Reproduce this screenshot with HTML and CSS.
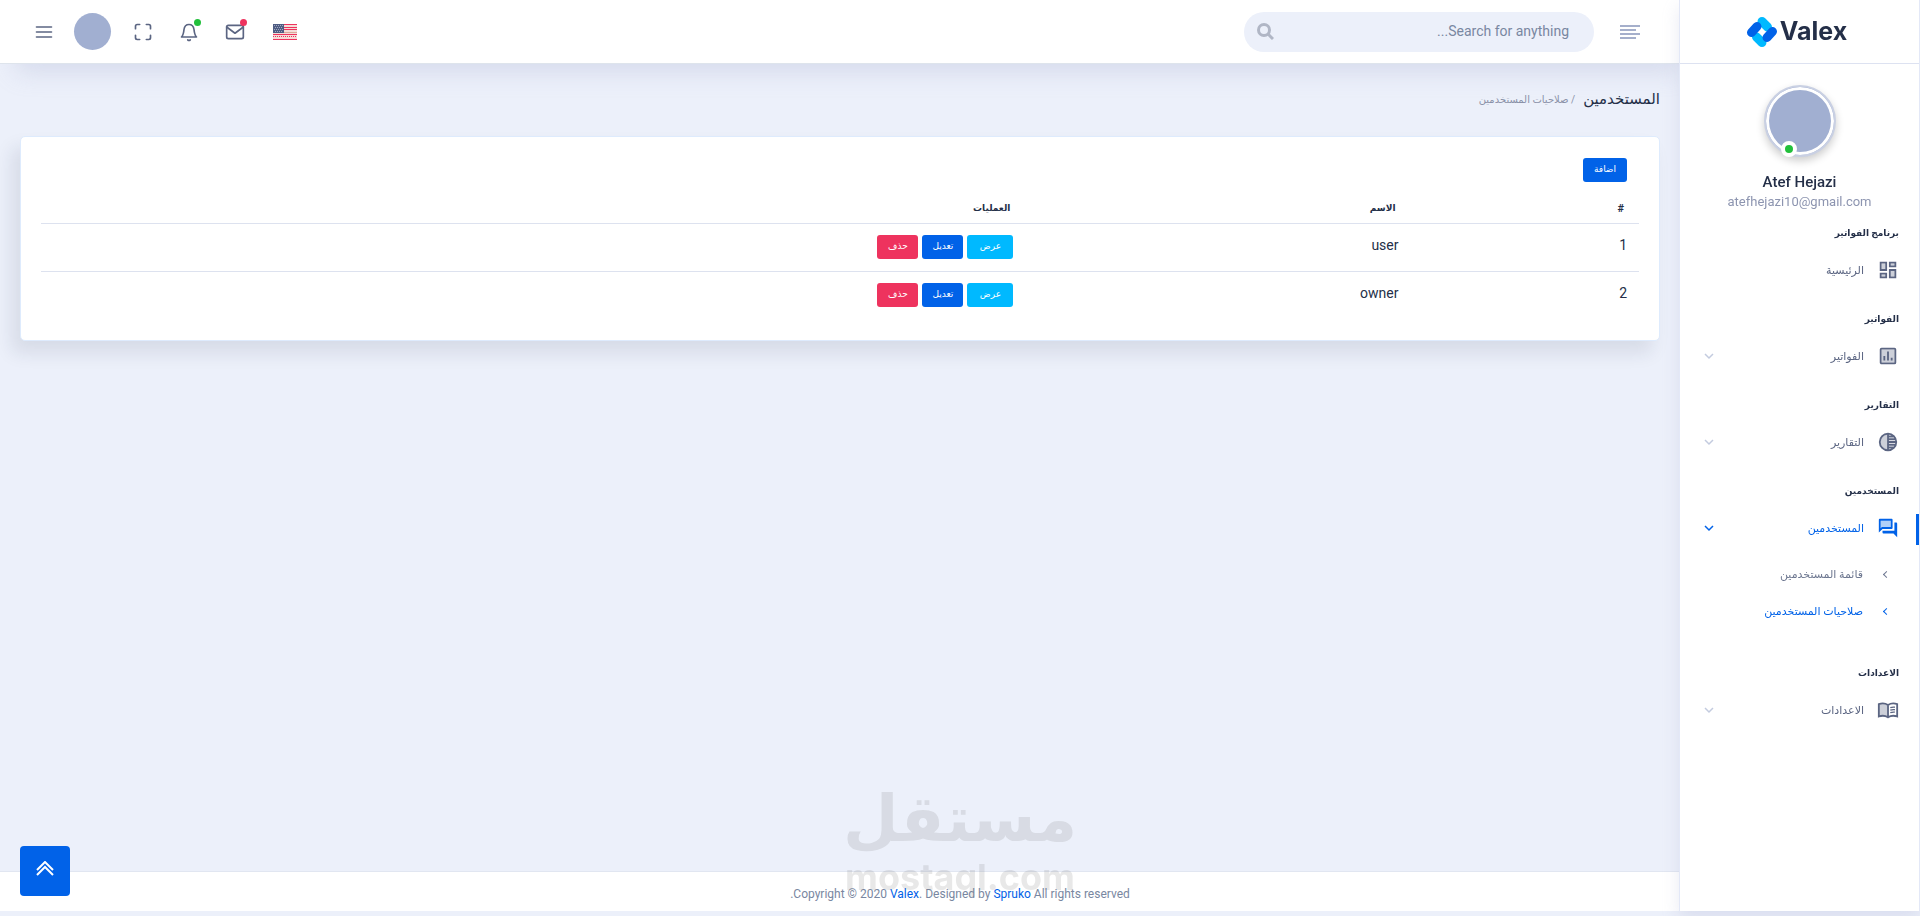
FILE: index.html
```html
<!DOCTYPE html>
<html lang="ar" dir="rtl">
<head>
<meta charset="utf-8">
<title>صلاحيات المستخدمين</title>
<link rel="stylesheet" href="styles.css">
</head>
<body>

<aside class="sidebar">
  <a class="logo" href="#" dir="ltr">
    <svg width="32" height="32" viewBox="0 0 32 32" stroke-width="9" stroke-linecap="round">
      <path stroke="#00b9ff" d="M16 5.500l5.500 5.500M16 26.500L10.500 21"/>
      <path stroke="#0162e8" d="M5.500 16.500L11 10.500M26.500 15.500L21 21.500"/>
    </svg>
    <span>Valex</span>
  </a>

  <div class="profile">
    <div class="avatar"><span class="status"></span></div>
    <h4>Atef Hejazi</h4>
    <span class="email">atefhejazi10@gmail.com</span>
  </div>

  <nav class="menu">
    <h3>برنامج الفواتير</h3>
    <a class="item" href="#">
      <svg class="icon" viewBox="0 0 24 24"><path opacity=".3" d="M5 5h4v6H5zm10 8h4v6h-4zM5 17h4v2H5zM15 5h4v2h-4z"/><path d="M3 13h8V3H3v10zm2-8h4v6H5V5zm8 16h8V11h-8v10zm2-8h4v6h-4v-6zM13 3v6h8V3h-8zm6 4h-4V5h4v2zM3 21h8v-6H3v6zm2-4h4v2H5v-2z"/></svg>
      <span>الرئيسية</span>
    </a>

    <h3>الفواتير</h3>
    <a class="item" href="#">
      <svg class="icon" viewBox="0 0 24 24"><path opacity=".3" d="M5 5h14v14H5z"/><path d="M19 3H5a2 2 0 0 0-2 2v14c0 1.100.9 2 2 2h14a2 2 0 0 0 2-2V5a2 2 0 0 0-2-2zm0 16H5V5h14v14zM7 12h2v5H7zm4-5h2v10h-2zm4 7h2v3h-2z"/></svg>
      <span>الفواتير</span>
      <svg class="chevron" viewBox="0 0 10 10"><path d="M1 3l4 4 4-4"/></svg>
    </a>

    <h3>التقارير</h3>
    <a class="item" href="#">
      <svg class="icon" viewBox="0 0 24 24"><path opacity=".3" d="M4 12a8 8 0 0 0 7 7.930V4.070A8 8 0 0 0 4 12z"/><path d="M12 2a10 10 0 1 0 0 20 10 10 0 0 0 0-20zm-1 17.930A8 8 0 0 1 11 4.070v15.860zM13 4.070c1 .1 2 .5 2.900.9H13v-.9zM13 7h5.200l.7 1H13V7zm0 3h6.700l.2 1H13v-1zm0 9.900v-.9h2.900c-.9.5-1.900.8-2.900.9zm5.200-2.900H13v-1h5.900l-.7 1zm1.500-3H13v-1h6.900l-.2 1z"/></svg>
      <span>التقارير</span>
      <svg class="chevron" viewBox="0 0 10 10"><path d="M1 3l4 4 4-4"/></svg>
    </a>

    <h3>المستخدمين</h3>
    <a class="item active" href="#">
      <svg class="icon" viewBox="0 0 24 24"><path opacity=".3" d="M15 11V4H4v8.170l.6-.6.6-.6H15z"/><path d="M21 6h-2v9H6v2c0 .6.400 1 1 1h11l4 4V7c0-.6-.4-1-1-1zm-5 7c.6 0 1-.4 1-1V3c0-.6-.4-1-1-1H3c-.6 0-1 .4-1 1v14l4-4h10zM4 12.200V4h11v7H5.200L4 12.200z"/></svg>
      <span>المستخدمين</span>
      <svg class="chevron" viewBox="0 0 10 10"><path d="M1 3l4 4 4-4"/></svg>
    </a>
    <ul class="submenu">
      <li><a href="#">قائمة المستخدمين</a></li>
      <li><a class="active" href="#">صلاحيات المستخدمين</a></li>
    </ul>

    <h3>الاعدادات</h3>
    <a class="item" href="#">
      <svg class="icon" viewBox="0 0 24 24"><path opacity=".3" d="M2 5.500c3-1 6-1 9 .5v13c-3-1.200-6-1.200-9-.5z"/><path fill="none" stroke="currentColor" stroke-width="2" d="M12 6.500C9 4.500 5 4.500 2 5.500V19c3-1 7-1 10 1 3-2 7-2 10-1V5.500c-3-1-7-1-10 1zV20"/><path fill="none" stroke="currentColor" stroke-width="1.500" d="M14.500 9.500c2-.7 3.500-.8 5-.5m-5 3.200c2-.7 3.500-.8 5-.5m-5 3.200c2-.7 3.500-.8 5-.5"/></svg>
      <span>الاعدادات</span>
      <svg class="chevron" viewBox="0 0 10 10"><path d="M1 3l4 4 4-4"/></svg>
    </a>
  </nav>
</aside>

<div class="page">
  <header class="topbar">
    <button class="toggle" aria-label="القائمة">
      <svg width="20" height="16" viewBox="0 0 20 16"><path d="M0 2h20M0 6h16M0 10h20M0 14h16"/></svg>
    </button>
    <form class="search">
      <input type="search" placeholder="Search for anything..." aria-label="Search">
      <button type="button" aria-label="Search">
        <svg width="17" height="17" viewBox="0 0 17 17"><circle cx="7" cy="7" r="5.500"/><path d="M11 11l5 5"/></svg>
      </button>
    </form>

    <div class="tools">
      <a href="#" aria-label="English">
        <svg width="24" height="16" viewBox="0 0 24 16">
          <path fill="#f5ddd8" d="M0 0h24v16H0z"/>
          <path stroke="#ee335e" d="M0 .5h24M0 3.500h24M0 5.500h24M0 10.500h24M0 15.500h24"/>
          <path stroke="#ee335e" stroke-dasharray="1 1" d="M0 12.500h24"/>
          <path stroke="#d9a99a" d="M0 8.500h24"/>
          <path fill="#4f5d83" d="M0 0h11v9H0z"/>
          <path stroke="#a0a8c0" stroke-dasharray="1 1" d="M1 1.500h9M2 3.500h8M1 5.500h9M2 7.500h8"/>
        </svg>
      </a>
      <button aria-label="الرسائل">
        <svg width="20" height="20" viewBox="0 0 24 24"><rect x="2" y="4" width="20" height="16" rx="2"/><path d="M2 6l10 7.500L22 6"/></svg>
        <span class="dot danger"></span>
      </button>
      <button aria-label="الاشعارات">
        <svg width="20" height="20" viewBox="0 0 24 24"><path d="M3 18h18c-2-2-2.500-4-3-9-.5-4-3-6-6-6S6.500 5 6 9c-.5 5-1 7-3 9zM10.500 21.500a2 2 0 0 0 3 0"/></svg>
        <span class="dot success"></span>
      </button>
      <button aria-label="ملء الشاشة">
        <svg width="20" height="20" viewBox="0 0 24 24"><path d="M8 3H5a2 2 0 0 0-2 2v3m18 0V5a2 2 0 0 0-2-2h-3m0 18h3a2 2 0 0 0 2-2v-3M3 16v3a2 2 0 0 0 2 2h3"/></svg>
      </button>
      <a class="user" href="#" aria-label="Atef Hejazi"></a>
      <button aria-label="المزيد">
        <svg width="20" height="20" viewBox="0 0 24 24"><path d="M3 6h18M3 12h18M3 18h18"/></svg>
      </button>
    </div>
  </header>

  <main>
    <div class="breadcrumb">
      <h1>المستخدمين</h1>
      <span>/ صلاحيات المستخدمين</span>
    </div>

    <section class="card">
      <a class="btn primary add" href="#">اضافة</a>
      <table>
        <thead>
          <tr>
            <th class="num">#</th>
            <th class="name">الاسم</th>
            <th>العمليات</th>
          </tr>
        </thead>
        <tbody>
          <tr>
            <td>1</td>
            <td>user</td>
            <td>
              <div class="actions">
                <a class="btn info" href="#">عرض</a>
                <a class="btn primary" href="#">تعديل</a>
                <button class="btn danger">حذف</button>
              </div>
            </td>
          </tr>
          <tr>
            <td>2</td>
            <td>owner</td>
            <td>
              <div class="actions">
                <a class="btn info" href="#">عرض</a>
                <a class="btn primary" href="#">تعديل</a>
                <button class="btn danger">حذف</button>
              </div>
            </td>
          </tr>
        </tbody>
      </table>
    </section>
  </main>
</div>

<footer class="footer">
  <span>Copyright © 2020 <a href="#">Valex</a>. Designed by <a href="#">Spruko</a> All rights reserved.</span>
</footer>

<div class="watermark">
  <span class="ar">مستقل</span>
  <span class="en">mostaql.com</span>
</div>

<a class="to-top" href="#" aria-label="الى الاعلى">
  <svg width="18" height="16" viewBox="0 0 18 16"><path d="M1 9l8-8 8 8M1 14l8-8 8 8"/></svg>
</a>

</body>
</html>
```
FILE: styles.css
```css
* {
  box-sizing: border-box;
}

body {
  margin: 0;
  min-height: 100vh;
  padding-bottom: 5px;
  display: flex;
  flex-direction: column;
  font-family: Roboto, "DejaVu Sans", sans-serif;
  font-size: 14px;
  line-height: 21px;
  color: #242f48;
  background-color: #ecf0fa;
}

a {
  color: #0162e8;
  text-decoration: none;
}

button {
  font-family: inherit;
  border: 0;
  padding: 0;
  background: none;
  cursor: pointer;
}

h1, h3, h4 {
  margin: 0;
}

svg {
  display: block;
}

/* sidebar */
.sidebar {
  position: fixed;
  top: 0;
  bottom: 5px;
  right: 0;
  z-index: 2;
  width: 241px;
  background-color: #fff;
  border: 1px solid #e3e8f7;
  border-width: 0 1px;
  box-shadow: 0 8px 16px rgba(162, 169, 204, 0.24);
}

.logo {
  height: 64px;
  display: flex;
  align-items: center;
  justify-content: center;
  gap: 2px;
  padding-right: 6px;
  border-bottom: 1px solid #dde2f1;
  font-family: Inter, sans-serif;
  font-size: 25px;
  font-weight: 700;
  color: #242f48;
}

.profile {
  padding: 21px 0 8px;
  display: flex;
  flex-direction: column;
  align-items: center;
}

.avatar {
  position: relative;
  width: 72px;
  height: 72px;
  margin-bottom: 15px;
  border: 2px solid #c9d0e3;
  border-radius: 50%;
  background-color: #a1afd1;
  box-shadow: inset 0 0 0 3px #fff, 0 4px 8px rgba(0, 0, 0, 0.2);
}

.status {
  position: absolute;
  left: 15px;
  bottom: -2px;
  width: 16px;
  height: 16px;
  border: 4px solid #fff;
  border-radius: 50%;
  background-color: #22c03c;
}

.profile h4 {
  font-size: 15px;
  font-weight: 500;
  line-height: 20px;
}

.email {
  font-size: 13px;
  line-height: 20px;
  color: #8d95b0;
}

.menu h3 {
  height: 27px;
  line-height: 27px;
  padding-right: 20px;
  font-size: 9px;
  font-weight: 700;
}

.item {
  height: 48px;
  margin-bottom: 11px;
  padding: 0 19px 2px 24px;
  display: flex;
  align-items: center;
  font-size: 11px;
  color: #5b6582;
}

.item .icon {
  width: 24px;
  height: 24px;
  padding: 1px;
  margin-left: 12px;
  fill: currentColor;
}

.item .chevron {
  width: 10px;
  height: 10px;
  margin-right: auto;
  fill: none;
  stroke: #c3cbdf;
  stroke-width: 1.5;
}

.item.active {
  position: relative;
  margin-bottom: 0;
  color: #0162e8;
}

.item.active .chevron {
  stroke: #0162e8;
}

.item.active::before {
  content: "";
  position: absolute;
  top: 9px;
  right: 0;
  width: 3px;
  height: 31px;
  background-color: #0162e8;
}

.submenu {
  list-style: none;
  margin: 0 0 11px;
  padding: 3px 30px 19px 0;
}

.submenu a {
  height: 37px;
  display: flex;
  align-items: center;
  font-size: 11px;
  color: #6d7790;
}

.submenu a::before {
  content: "";
  width: 4px;
  height: 4px;
  margin-left: 21px;
  border: 1px solid currentColor;
  border-width: 0 0 1px 1px;
  transform: rotate(45deg);
}

.submenu a.active {
  color: #0162e8;
}

/* header */
.page {
  flex: 1;
  margin-right: 240px;
}

.topbar {
  height: 64px;
  padding: 0 40px 0 34px;
  display: flex;
  align-items: center;
  background-color: #fff;
  border-bottom: 1px solid #dee4ec;
  box-shadow: 8px 16px 24px -8px rgba(162, 169, 204, 0.3);
}

.toggle svg {
  fill: none;
  stroke: #a5afcb;
  stroke-width: 2;
}

.search {
  width: 350px;
  height: 40px;
  margin-right: 26px;
  display: flex;
  align-items: center;
  padding: 0 25px 0 13px;
  border-radius: 20px;
  background-color: #ecf0fa;
}

.search input {
  flex: 1;
  min-width: 0;
  border: 0;
  padding: 0;
  outline: none;
  background: none;
  font: inherit;
  color: #242f48;
}

.search input::placeholder {
  color: #7987a1;
}

.search svg {
  fill: none;
  stroke: #b0b6c5;
  stroke-width: 3;
}

.tools {
  margin-right: auto;
  display: flex;
  align-items: center;
  gap: 26px;
}

.tools button {
  position: relative;
}

.tools button svg {
  fill: none;
  stroke: #5b6582;
  stroke-width: 2;
  stroke-linecap: round;
  stroke-linejoin: round;
}

.tools > a:first-child {
  margin-left: 2px;
}

.user {
  width: 37px;
  height: 37px;
  margin: 0 -4px 0 -6px;
  border-radius: 50%;
  background-color: #a1afd1;
}

.dot {
  position: absolute;
  top: -3px;
  right: -2px;
  width: 7px;
  height: 7px;
  border-radius: 50%;
}

.dot.success {
  background-color: #22c03c;
}

.dot.danger {
  background-color: #ee335e;
}

/* content */
main {
  padding: 0 20px;
}

.breadcrumb {
  height: 72px;
  padding-bottom: 2px;
  display: flex;
  align-items: center;
  gap: 8px;
}

.breadcrumb h1 {
  font-size: 15px;
  font-weight: 400;
}

.breadcrumb span {
  font-size: 10px;
  color: #8a91a8;
}

.card {
  padding: 20px 20px 21px;
  border: 1px solid #deebfd;
  border-radius: 5px;
  background-color: #fff;
  box-shadow: -8px 12px 18px 0 rgba(25, 42, 70, 0.1);
}

.btn {
  height: 24px;
  min-width: 41px;
  padding: 0 8px 2px;
  display: inline-flex;
  align-items: center;
  justify-content: center;
  border-radius: 3px;
  font-size: 9px;
  line-height: 20px;
  color: #fff;
}

.btn.primary {
  background-color: #0162e8;
}

.btn.info {
  min-width: 46px;
  background-color: #00b9ff;
}

.btn.danger {
  background-color: #ee335e;
}

.btn.add {
  min-width: 44px;
  margin-right: 12px;
}

table {
  width: 100%;
  margin-top: 8px;
  border-collapse: collapse;
  text-align: right;
}

th {
  height: 33px;
  padding: 5px 15px 0;
  font-size: 9px;
  font-weight: 700;
}

td {
  height: 48px;
  padding: 11px 12px;
  vertical-align: top;
}

tbody tr {
  border-top: 1px solid #dde2ef;
}

.num {
  width: 14.3%;
  font-size: 11px;
}

.name {
  width: 24.1%;
}

.actions {
  display: flex;
  gap: 4px;
}

/* footer */
.footer {
  height: 40px;
  padding-top: 2px;
  border-top: 1px solid #e1e6f1;
  background-color: #fff;
  text-align: center;
  font-size: 12px;
  line-height: 40px;
  color: #7987a1;
}

.watermark {
  position: fixed;
  left: 0;
  right: 0;
  bottom: 19px;
  display: flex;
  flex-direction: column;
  align-items: center;
  color: #787878;
  opacity: 0.17;
  font-weight: 700;
  pointer-events: none;
}

.watermark .ar {
  font-family: "DejaVu Sans", sans-serif;
  font-size: 64px;
  line-height: 76px;
}

.watermark .en {
  font-family: Inter, sans-serif;
  font-size: 36px;
  line-height: 40px;
}

.to-top {
  position: fixed;
  left: 20px;
  bottom: 20px;
  width: 50px;
  height: 50px;
  padding-bottom: 4px;
  display: flex;
  align-items: center;
  justify-content: center;
  border-radius: 4px;
  background-color: #0162e8;
}

.to-top svg {
  fill: none;
  stroke: #fff;
  stroke-width: 2;
}
```
